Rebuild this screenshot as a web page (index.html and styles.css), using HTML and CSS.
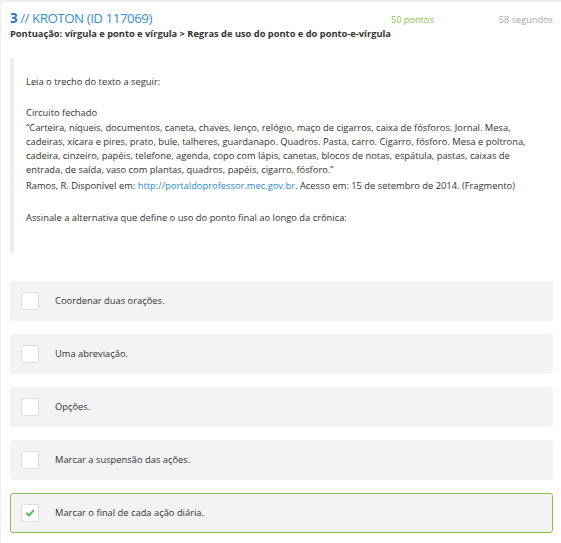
FILE: index.html
```html
<!DOCTYPE html>
<html lang="pt-BR">
<head>
<meta charset="utf-8">
<title>Questão 3</title>
<link rel="stylesheet" href="styles.css">
</head>
<body>
<div class="card">
  <div class="header">
    <div class="title"><span class="num">3</span> // KROTON (ID 117069)</div>
    <div class="meta">
      <span class="points">50 pontos</span>
      <span class="time">58 segundos</span>
    </div>
  </div>
  <div class="subject">Pontuação: vírgula e ponto e vírgula &gt; Regras de uso do ponto e do ponto-e-vírgula</div>

  <blockquote class="statement">
    <p class="intro">Leia o trecho do texto a seguir:</p>
    <p class="poem-title">Circuito fechado</p>
    <p class="poem">“Carteira, níqueis, documentos, caneta, chaves, lenço, relógio, maço de cigarros, caixa de fósforos. Jornal. Mesa,<br>cadeiras, xícara e pires, prato, bule, talheres, guardanapo. Quadros. Pasta, carro. Cigarro, fósforo. Mesa e poltrona,<br>cadeira, cinzeiro, papéis, telefone, agenda, copo com lápis, canetas, blocos de notas, espátula, pastas, caixas de<br>entrada, de saída, vaso com plantas, quadros, papéis, cigarro, fósforo.”</p>
    <p class="source">Ramos, R. Disponível em: <a href="#">http://portaldoprofessor.mec.gov.br</a>. Acesso em: 15 de setembro de 2014. (Fragmento)</p>
    <p class="question">Assinale a alternativa que define o uso do ponto final ao longo da crônica:</p>
  </blockquote>

  <div class="options">
    <div class="option"><span class="check"></span><span class="label">Coordenar duas orações.</span></div>
    <div class="option"><span class="check"></span><span class="label">Uma abreviação.</span></div>
    <div class="option"><span class="check"></span><span class="label">Opções.</span></div>
    <div class="option"><span class="check"></span><span class="label">Marcar a suspensão das ações.</span></div>
    <div class="option selected"><span class="check"><svg viewBox="0 0 12 12" width="10" height="10"><path d="M2 6.4 L4.8 9 L10 3.2" fill="none" stroke="#5cb85c" stroke-width="2.4" stroke-linecap="round" stroke-linejoin="round"/></svg></span><span class="label">Marcar o final de cada ação diária.</span></div>
  </div>
</div>
</body>
</html>
```

FILE: styles.css
```css
html, body {
  margin: 0;
  padding: 0;
}
body {
  background: #eceef1;
  font-family: "Open Sans", "Liberation Sans", sans-serif;
  color: #333;
  font-size: 9.35px;
  line-height: 14px;
}
.card {
  margin: 2px 0 0 1px;
  background: #fff;
  border-radius: 4px 0 0 0;
  padding: 6px 8px 11px 9px;
  min-height: 541px;
  box-sizing: border-box;
}
.header {
  display: flex;
  justify-content: space-between;
  align-items: baseline;
}
.title {
  font-size: 13.4px;
  letter-spacing: -0.5px;
  line-height: 20px;
  color: #3a8fd2;
}
.title .num {
  color: #2878ba;
  font-weight: 700;
}
.meta {
  display: flex;
  gap: 65px;
  font-size: 9.2px;
}
.points { color: #8cc152; }
.time { color: #a9a9a9; }
.subject {
  font-size: 9.3px;
  line-height: 12px;
  font-weight: 700;
  color: #333;
}
.statement {
  margin: 18px 0 0 0;
  border-left: 4px solid #eeeeee;
  padding: 17px 0 28px 12px;
}
.statement p {
  margin: 0;
}
.statement .intro { margin-bottom: 17px; }
.statement .poem-title { margin-bottom: 1px; }
.statement .source { margin-top: 2px; }
.statement .question { margin-top: 18px; }
.statement a {
  color: #2a8ad4;
  text-decoration: none;
}
.options {
  margin-top: 28px;
  display: flex;
  flex-direction: column;
  gap: 13px;
}
.option {
  display: flex;
  align-items: center;
  height: 40px;
  box-sizing: border-box;
  background: #f3f3f3;
  border-radius: 3px;
  padding-left: 11px;
}
.option.selected {
  border: 1px solid #8cc152;
  padding-left: 10px;
}
.check {
  width: 18px;
  height: 18px;
  box-sizing: border-box;
  background: #fff;
  border: 1px solid #dedede;
  border-radius: 2px;
  display: flex;
  align-items: center;
  justify-content: center;
  flex: none;
}
.label {
  margin-left: 16px;
  color: #333;
}
```
